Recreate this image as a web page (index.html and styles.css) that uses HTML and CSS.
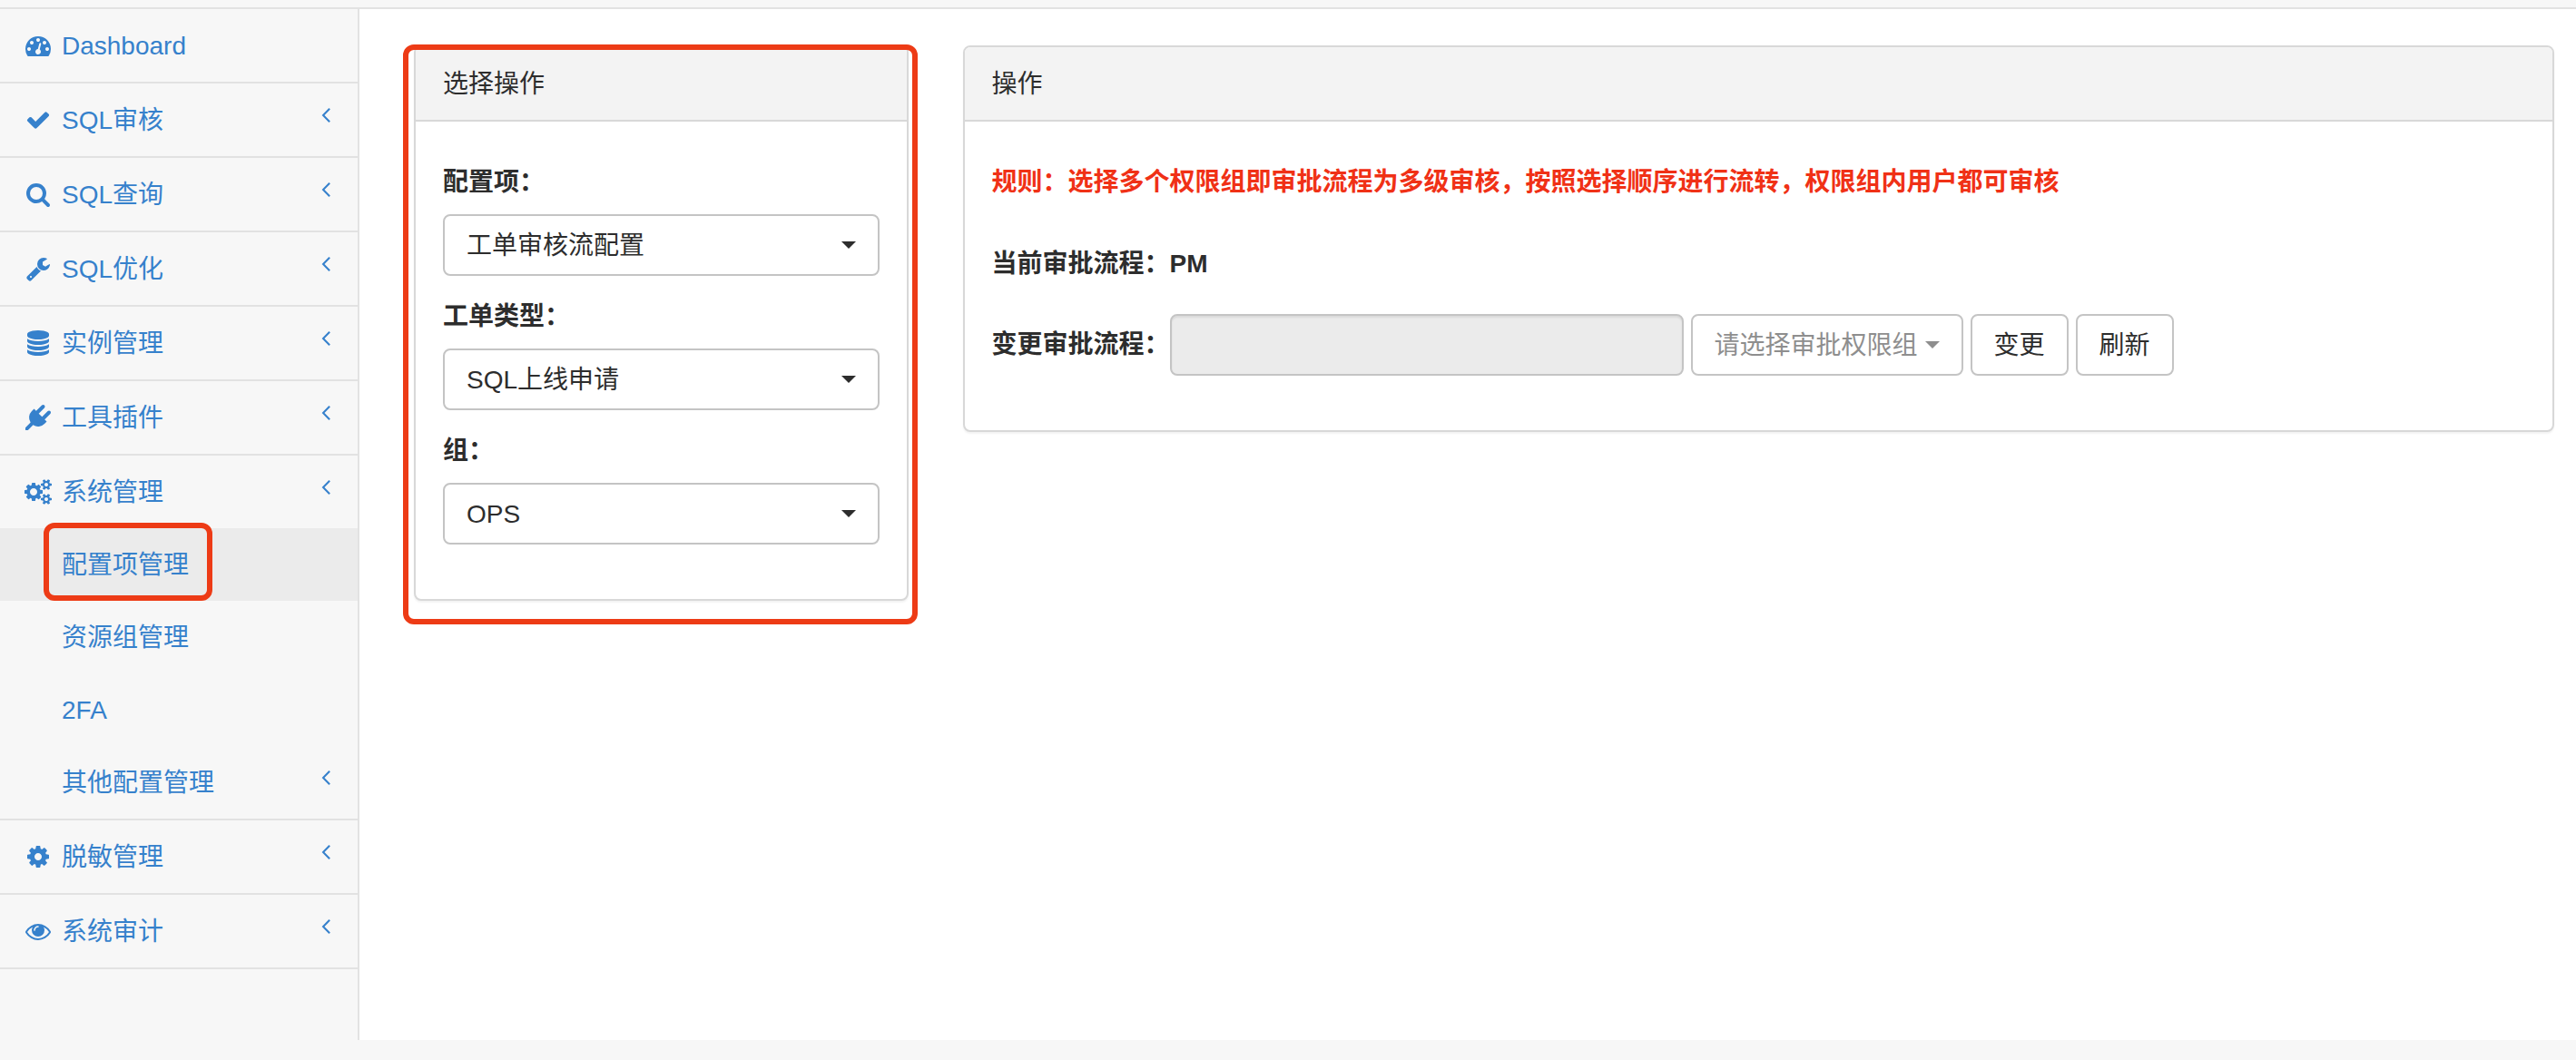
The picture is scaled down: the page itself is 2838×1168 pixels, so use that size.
FILE: index.html
```html
<!DOCTYPE html>
<html lang="zh-CN">
<head>
<meta charset="utf-8">
<meta name="viewport" content="width=device-width, initial-scale=1">
<title>配置项管理</title>
<link rel="stylesheet" href="styles.css">
</head>
<body>
<svg class="sprite" aria-hidden="true">
  <symbol id="angle-left" viewBox="576 0 640 1792"><path d="M1203 544q0 13-10 23l-393 393 393 393q10 10 10 23t-10 23l-50 50q-10 10-23 10t-23-10l-466-466q-10-10-10-23t10-23l466-466q10-10 23-10t23 10l50 50q10 10 10 23z"/></symbol>
</svg>
<header class="topbar"></header>
<div class="page">
  <nav class="sidebar" aria-label="主菜单">
    <ul class="menu">
      <li class="menu-item"><a class="menu-link" href="#">
        <span class="menu-icon"><svg class="icon" viewBox="0 0 1792 1792"><path d="M384 1152q0-53-37.5-90.5t-90.5-37.5-90.5 37.5-37.5 90.5 37.5 90.5 90.5 37.5 90.5-37.5 37.5-90.5zm192-448q0-53-37.5-90.5t-90.5-37.5-90.5 37.5-37.5 90.5 37.5 90.5 90.5 37.5 90.5-37.5 37.5-90.5zm428 481l101-382q6-26-7.5-48.5t-38.5-29.5-48 6.5-30 39.5l-101 382q-60 5-107 43.5t-63 98.5q-20 77 20 146t117 89 146-20 89-117q16-60-6-117t-72-91zm660-33q0-53-37.5-90.5t-90.5-37.5-90.5 37.5-37.5 90.5 37.5 90.5 90.5 37.5 90.5-37.5 37.5-90.5zm-640-640q0-53-37.5-90.5t-90.5-37.5-90.5 37.5-37.5 90.5 37.5 90.5 90.5 37.5 90.5-37.5 37.5-90.5zm448 192q0-53-37.5-90.5t-90.5-37.5-90.5 37.5-37.5 90.5 37.5 90.5 90.5 37.5 90.5-37.5 37.5-90.5zm320 448q0 261-141 483-19 29-54 29h-1402q-35 0-54-29-141-221-141-483 0-182 71-348t191-286 286-191 348-71 348 71 286 191 191 286 71 348z"/></svg></span>
        <span class="menu-text">Dashboard</span></a></li>
      <li class="menu-item"><a class="menu-link" href="#">
        <span class="menu-icon"><svg class="icon" viewBox="0 0 1792 1792"><path d="M1671 566q0 40-28 68l-724 724-136 136q-28 28-68 28t-68-28l-136-136-362-362q-28-28-28-68t28-68l136-136q28-28 68-28t68 28l294 295 656-657q28-28 68-28t68 28l136 136q28 28 28 68z"/></svg></span>
        <span class="menu-text">SQL审核</span><svg class="arrow"><use href="#angle-left"/></svg></a></li>
      <li class="menu-item"><a class="menu-link" href="#">
        <span class="menu-icon"><svg class="icon" viewBox="0 0 1792 1792"><path d="M1216 832q0-185-131.5-316.5t-316.5-131.5-316.5 131.5-131.5 316.5 131.5 316.5 316.5 131.5 316.5-131.5 131.5-316.5zm512 832q0 52-38 90t-90 38q-54 0-90-38l-343-342q-179 124-399 124-143 0-273.5-55.5t-225-150-150-225-55.5-273.5 55.5-273.5 150-225 225-150 273.5-55.5 273.5 55.5 225 150 150 225 55.5 273.5q0 220-124 399l343 343q37 37 37 90z"/></svg></span>
        <span class="menu-text">SQL查询</span><svg class="arrow"><use href="#angle-left"/></svg></a></li>
      <li class="menu-item"><a class="menu-link" href="#">
        <span class="menu-icon"><svg class="icon" viewBox="0 0 1792 1792"><path d="M448 1472q0-26-19-45t-45-19-45 19-19 45 19 45 45 19 45-19 19-45zm644-420l-682 682q-37 37-90 37-52 0-91-37l-106-108q-38-36-38-90 0-53 38-91l681-681q39 98 114.5 173.5t173.5 114.5zm634-435q0 39-23 106-47 134-164.5 217.5t-258.5 83.5q-185 0-316.5-131.5t-131.5-316.5 131.5-316.5 316.5-131.5q58 0 121.5 16.5t107.5 46.5q16 11 16 28t-16 28l-293 169v224l193 107q5-3 79-48.5t135.5-81 70.5-35.5q15 0 23.5 10t8.5 25z"/></svg></span>
        <span class="menu-text">SQL优化</span><svg class="arrow"><use href="#angle-left"/></svg></a></li>
      <li class="menu-item"><a class="menu-link" href="#">
        <span class="menu-icon"><svg class="icon" viewBox="0 0 1792 1792"><path d="M896 768q237 0 443-43t325-127v170q0 69-103 128t-280 93.5-385 34.5-385-34.5-280-93.5-103-128v-170q119 84 325 127t443 43zm0 768q237 0 443-43t325-127v170q0 69-103 128t-280 93.5-385 34.5-385-34.5-280-93.5-103-128v-170q119 84 325 127t443 43zm0-384q237 0 443-43t325-127v170q0 69-103 128t-280 93.5-385 34.5-385-34.5-280-93.5-103-128v-170q119 84 325 127t443 43zm0-1152q208 0 385 34.5t280 93.5 103 128v128q0 69-103 128t-280 93.5-385 34.5-385-34.5-280-93.5-103-128v-128q0-69 103-128t280-93.5 385-34.5z"/></svg></span>
        <span class="menu-text">实例管理</span><svg class="arrow"><use href="#angle-left"/></svg></a></li>
      <li class="menu-item"><a class="menu-link" href="#">
        <span class="menu-icon"><svg class="icon" viewBox="0 0 1792 1792"><path d="M1755 453q37 38 37 90.5t-37 90.5l-401 400 150 150-160 160q-163 163-389.5 186.5t-411.5-100.5l-362 362h-181v-181l362-362q-124-185-100.5-411.5t186.5-389.5l160-160 150 150 400-401q38-37 91-37t90 37 37 90.5-37 90.5l-400 401 234 234 401-400q38-37 91-37t90 37z"/></svg></span>
        <span class="menu-text">工具插件</span><svg class="arrow"><use href="#angle-left"/></svg></a></li>
      <li class="menu-item"><a class="menu-link" href="#">
        <span class="menu-icon"><svg class="icon icon-wide" viewBox="0 0 1920 1792"><path d="M896 896q0-106-75-181t-181-75-181 75-75 181 75 181 181 75 181-75 75-181zm768 512q0-52-38-90t-90-38-90 38-38 90q0 53 37.5 90.5t90.5 37.5 90.5-37.5 37.5-90.5zm0-1024q0-52-38-90t-90-38-90 38-38 90q0 53 37.5 90.5t90.5 37.5 90.5-37.5 37.5-90.5zm-384 421v185q0 10-7 19.5t-16 10.5l-155 24q-11 35-32 76 34 48 90 115 7 11 7 20 0 12-7 19-23 30-82.5 89.5t-78.5 59.5q-11 0-21-7l-115-90q-37 19-77 31-11 108-23 155-7 24-30 24h-186q-11 0-20-7.5t-10-17.5l-23-153q-34-10-75-31l-118 89q-7 7-20 7-11 0-21-8-144-133-144-160 0-9 7-19 10-14 41-53t47-61q-23-44-35-82l-152-24q-10-1-17-9.5t-7-19.5v-185q0-10 7-19.5t16-10.5l155-24q11-35 32-76-34-48-90-115-7-11-7-20 0-12 7-20 22-30 82-89t79-59q11 0 21 7l115 90q34-18 77-32 11-108 23-154 7-24 30-24h186q11 0 20 7.5t10 17.5l23 153q34 10 75 31l118-89q8-7 20-7 11 0 21 8 144 133 144 160 0 8-7 19-12 16-42 54t-45 60q23 48 34 82l152 23q10 2 17 10.5t7 19.5zm640 533v140q0 16-149 31-12 27-30 52 51 113 51 138 0 4-4 7-122 71-124 71-8 0-46-47t-52-68q-20 2-30 2t-30-2q-14 21-52 68t-46 47q-2 0-124-71-4-3-4-7 0-25 51-138-18-25-30-52-149-15-149-31v-140q0-16 149-31 13-29 30-52-51-113-51-138 0-4 4-7 4-2 35-20t59-34 30-16q8 0 46 46.5t52 67.5q20-2 30-2t30 2q51-71 92-112l6-2q4 0 124 70 4 3 4 7 0 25-51 138 17 23 30 52 149 15 149 31zm0-1024v140q0 16-149 31-12 27-30 52 51 113 51 138 0 4-4 7-122 71-124 71-8 0-46-47t-52-68q-20 2-30 2t-30-2q-14 21-52 68t-46 47q-2 0-124-71-4-3-4-7 0-25 51-138-18-25-30-52-149-15-149-31v-140q0-16 149-31 13-29 30-52-51-113-51-138 0-4 4-7 4-2 35-20t59-34 30-16q8 0 46 46.5t52 67.5q20-2 30-2t30 2q51-71 92-112l6-2q4 0 124 70 4 3 4 7 0 25-51 138 17 23 30 52 149 15 149 31z"/></svg></span>
        <span class="menu-text">系统管理</span><svg class="arrow"><use href="#angle-left"/></svg></a>
        <ul class="submenu">
          <li class="submenu-item marked"><a class="menu-link sub active" href="#"><span class="menu-text">配置项管理</span></a></li>
          <li class="submenu-item"><a class="menu-link sub" href="#"><span class="menu-text">资源组管理</span></a></li>
          <li class="submenu-item"><a class="menu-link sub" href="#"><span class="menu-text">2FA</span></a></li>
          <li class="submenu-item"><a class="menu-link sub" href="#"><span class="menu-text">其他配置管理</span><svg class="arrow"><use href="#angle-left"/></svg></a></li>
        </ul>
      </li>
      <li class="menu-item"><a class="menu-link" href="#">
        <span class="menu-icon"><svg class="icon" viewBox="0 0 1792 1792"><path d="M1152 896q0-106-75-181t-181-75-181 75-75 181 75 181 181 75 181-75 75-181zm512-109v222q0 12-8 23t-20 13l-185 28q-19 54-39 91 35 50 107 138 10 12 10 25t-9 23q-27 37-99 108t-94 71q-12 0-26-9l-138-108q-44 23-91 38-16 136-29 186-7 28-36 28h-222q-14 0-24.5-8.5t-11.5-21.5l-28-184q-49-16-90-37l-141 107q-10 9-25 9-14 0-25-11-126-114-165-168-7-10-7-23 0-12 8-23 15-21 51-66.5t54-70.5q-27-50-41-99l-183-27q-13-2-21-12.5t-8-23.5v-222q0-12 8-23t19-13l186-28q14-46 39-92-40-57-107-138-10-12-10-24 0-10 9-23 26-36 98.5-107.5t94.5-71.5q13 0 26 10l138 107q44-23 91-38 16-136 29-186 7-28 36-28h222q14 0 24.5 8.5t11.5 21.5l28 184q49 16 90 37l142-107q9-9 24-9 13 0 25 10 129 119 165 170 7 8 7 22 0 12-8 23-15 21-51 66.5t-54 70.5q26 50 41 98l183 28q13 2 21 12.5t8 23.5z"/></svg></span>
        <span class="menu-text">脱敏管理</span><svg class="arrow"><use href="#angle-left"/></svg></a></li>
      <li class="menu-item"><a class="menu-link" href="#">
        <span class="menu-icon"><svg class="icon" viewBox="0 0 1792 1792"><path d="M1664 960q-152-236-381-353 61 104 61 225 0 185-131.5 316.5t-316.5 131.5-316.5-131.5-131.5-316.5q0-121 61-225-229 117-381 353 133 205 333.5 326.5t434.5 121.5 434.5-121.5 333.5-326.5zm-720-384q0-20-14-34t-34-14q-125 0-214.5 89.5t-89.5 214.5q0 20 14 34t34 14 34-14 14-34q0-86 61-147t147-61q20 0 34-14t14-34zm848 384q0 34-20 69-140 230-376.5 368.5t-499.5 138.5-499.5-139-376.5-368q-20-35-20-69t20-69q140-229 376.5-368t499.5-139 499.5 139 376.5 368q20 35 20 69z"/></svg></span>
        <span class="menu-text">系统审计</span><svg class="arrow"><use href="#angle-left"/></svg></a></li>
    </ul>
  </nav>
  <main class="content">
    <section class="panel marked">
      <h2 class="panel-heading">选择操作</h2>
      <form class="panel-body fields">
        <div class="field">
          <label class="label" for="config-item">配置项：</label>
          <div class="select-box"><select class="control select" id="config-item"><option>工单审核流配置</option></select></div>
        </div>
        <div class="field">
          <label class="label" for="workflow-type">工单类型：</label>
          <div class="select-box"><select class="control select" id="workflow-type"><option>SQL上线申请</option></select></div>
        </div>
        <div class="field">
          <label class="label" for="group">组：</label>
          <div class="select-box"><select class="control select" id="group"><option>OPS</option></select></div>
        </div>
      </form>
    </section>
    <section class="panel">
      <h2 class="panel-heading">操作</h2>
      <form class="panel-body">
        <p class="rule">规则：选择多个权限组即审批流程为多级审核，按照选择顺序进行流转，权限组内用户都可审核</p>
        <p class="current">当前审批流程：<b>PM</b></p>
        <div class="change-row">
          <label class="label change-label" for="flow">变更审批流程：</label>
          <input class="control flow" id="flow" type="text" disabled>
          <div class="select-box placeholder"><select class="control select" aria-label="审批权限组"><option>请选择审批权限组</option></select></div>
          <button class="control button" type="button">变更</button>
          <button class="control button" type="button">刷新</button>
        </div>
      </form>
    </section>
  </main>
</div>
</body>
</html>
```

FILE: styles.css
```css
*,
*::after {
  box-sizing: border-box;
}

body {
  display: flex;
  flex-direction: column;
  min-height: 100vh;
  margin: 0;
  padding-bottom: 22px;
  background: #f7f7f7;
  color: #2d2d2d;
  font-family: "Liberation Sans", "Noto Sans CJK SC", sans-serif;
  font-size: 28px;
  line-height: 42px;
}

.sprite {
  display: none;
}

.topbar {
  height: 10px;
  border-bottom: 2px solid #e2e2e2;
}

.page {
  display: flex;
  flex: 1;
}

/* Sidebar */

.sidebar {
  flex: none;
  width: 396px;
  border-right: 2px solid #e2e2e2;
}

.menu,
.submenu {
  margin: 0;
  padding: 0;
  list-style: none;
}

.menu-item {
  border-bottom: 2px solid #e2e2e2;
}

.menu-link {
  display: flex;
  align-items: flex-start;
  gap: 8px;
  padding: 20px 30px 18px 24px;
  color: #3681cc;
  text-decoration: none;
}

.menu-link.sub {
  padding-left: 68px;
}

.menu-link.active {
  background: #ebebeb;
}

.menu-icon {
  display: flex;
  align-items: center;
  justify-content: center;
  width: 36px;
  height: 40px;
}

.menu-text {
  flex: 1;
}

.icon {
  width: 28px;
  height: 28px;
  fill: currentColor;
}

.icon-wide {
  width: 30px;
}

.arrow {
  width: 10px;
  height: 28px;
  fill: currentColor;
}

/* Red highlight frames */

.marked {
  position: relative;
}

.marked::after {
  content: "";
  position: absolute;
  border: 6px solid #ed3b16;
  border-radius: 12px;
  pointer-events: none;
}

.submenu-item.marked::after {
  top: -6px;
  bottom: 0;
  left: 48px;
  width: 186px;
}

.panel.marked::after {
  inset: -3px -12px -28px -14px;
}

/* Content */

.content {
  display: grid;
  flex: 1;
  grid-template-columns: 1fr calc(75% - 15px);
  align-items: start;
  gap: 60px;
  padding: 40px 24px 40px 60px;
  background: #fff;
}

.panel {
  border: 2px solid #d8d8d8;
  border-radius: 8px;
  background: #fff;
  box-shadow: 0 2px 2px rgba(0, 0, 0, 0.05);
}

.panel-heading {
  margin: 0;
  padding: 20px 30px 18px;
  border-bottom: 2px solid #d8d8d8;
  border-radius: 6px 6px 0 0;
  background: #f3f3f3;
  font-size: 28px;
  font-weight: 400;
}

.panel-body {
  padding: 46px 30px 60px;
}

.fields {
  display: grid;
  gap: 24px;
}

.field {
  display: grid;
  gap: 14px;
}

.label {
  font-weight: 700;
}

.control {
  height: 68px;
  padding: 2px 24px 0;
  border: 2px solid #c4c4c4;
  border-radius: 8px;
  background: #fff;
  color: inherit;
  font: inherit;
}

.select-box {
  position: relative;
}

.select {
  width: 100%;
  appearance: none;
}

.select-box::after {
  content: "";
  position: absolute;
  top: 30px;
  right: 26px;
  border-top: 8px solid currentColor;
  border-right: 8px solid transparent;
  border-left: 8px solid transparent;
  pointer-events: none;
}

.rule,
.current {
  margin: 0;
  font-weight: 700;
}

.rule {
  margin-bottom: 48px;
  color: #f03116;
}

.current {
  margin-bottom: 34px;
}

.change-row {
  display: flex;
  flex-wrap: wrap;
  align-items: center;
  gap: 8px;
}

/* The full-width colon already leaves room before the text box. */
.change-label {
  margin-right: -8px;
}

.flow {
  width: 566px;
  background: #ebebeb;
  box-shadow: inset 0 2px 2px rgba(0, 0, 0, 0.08);
}

.placeholder {
  width: 300px;
  color: #8e8e8e;
}
```
